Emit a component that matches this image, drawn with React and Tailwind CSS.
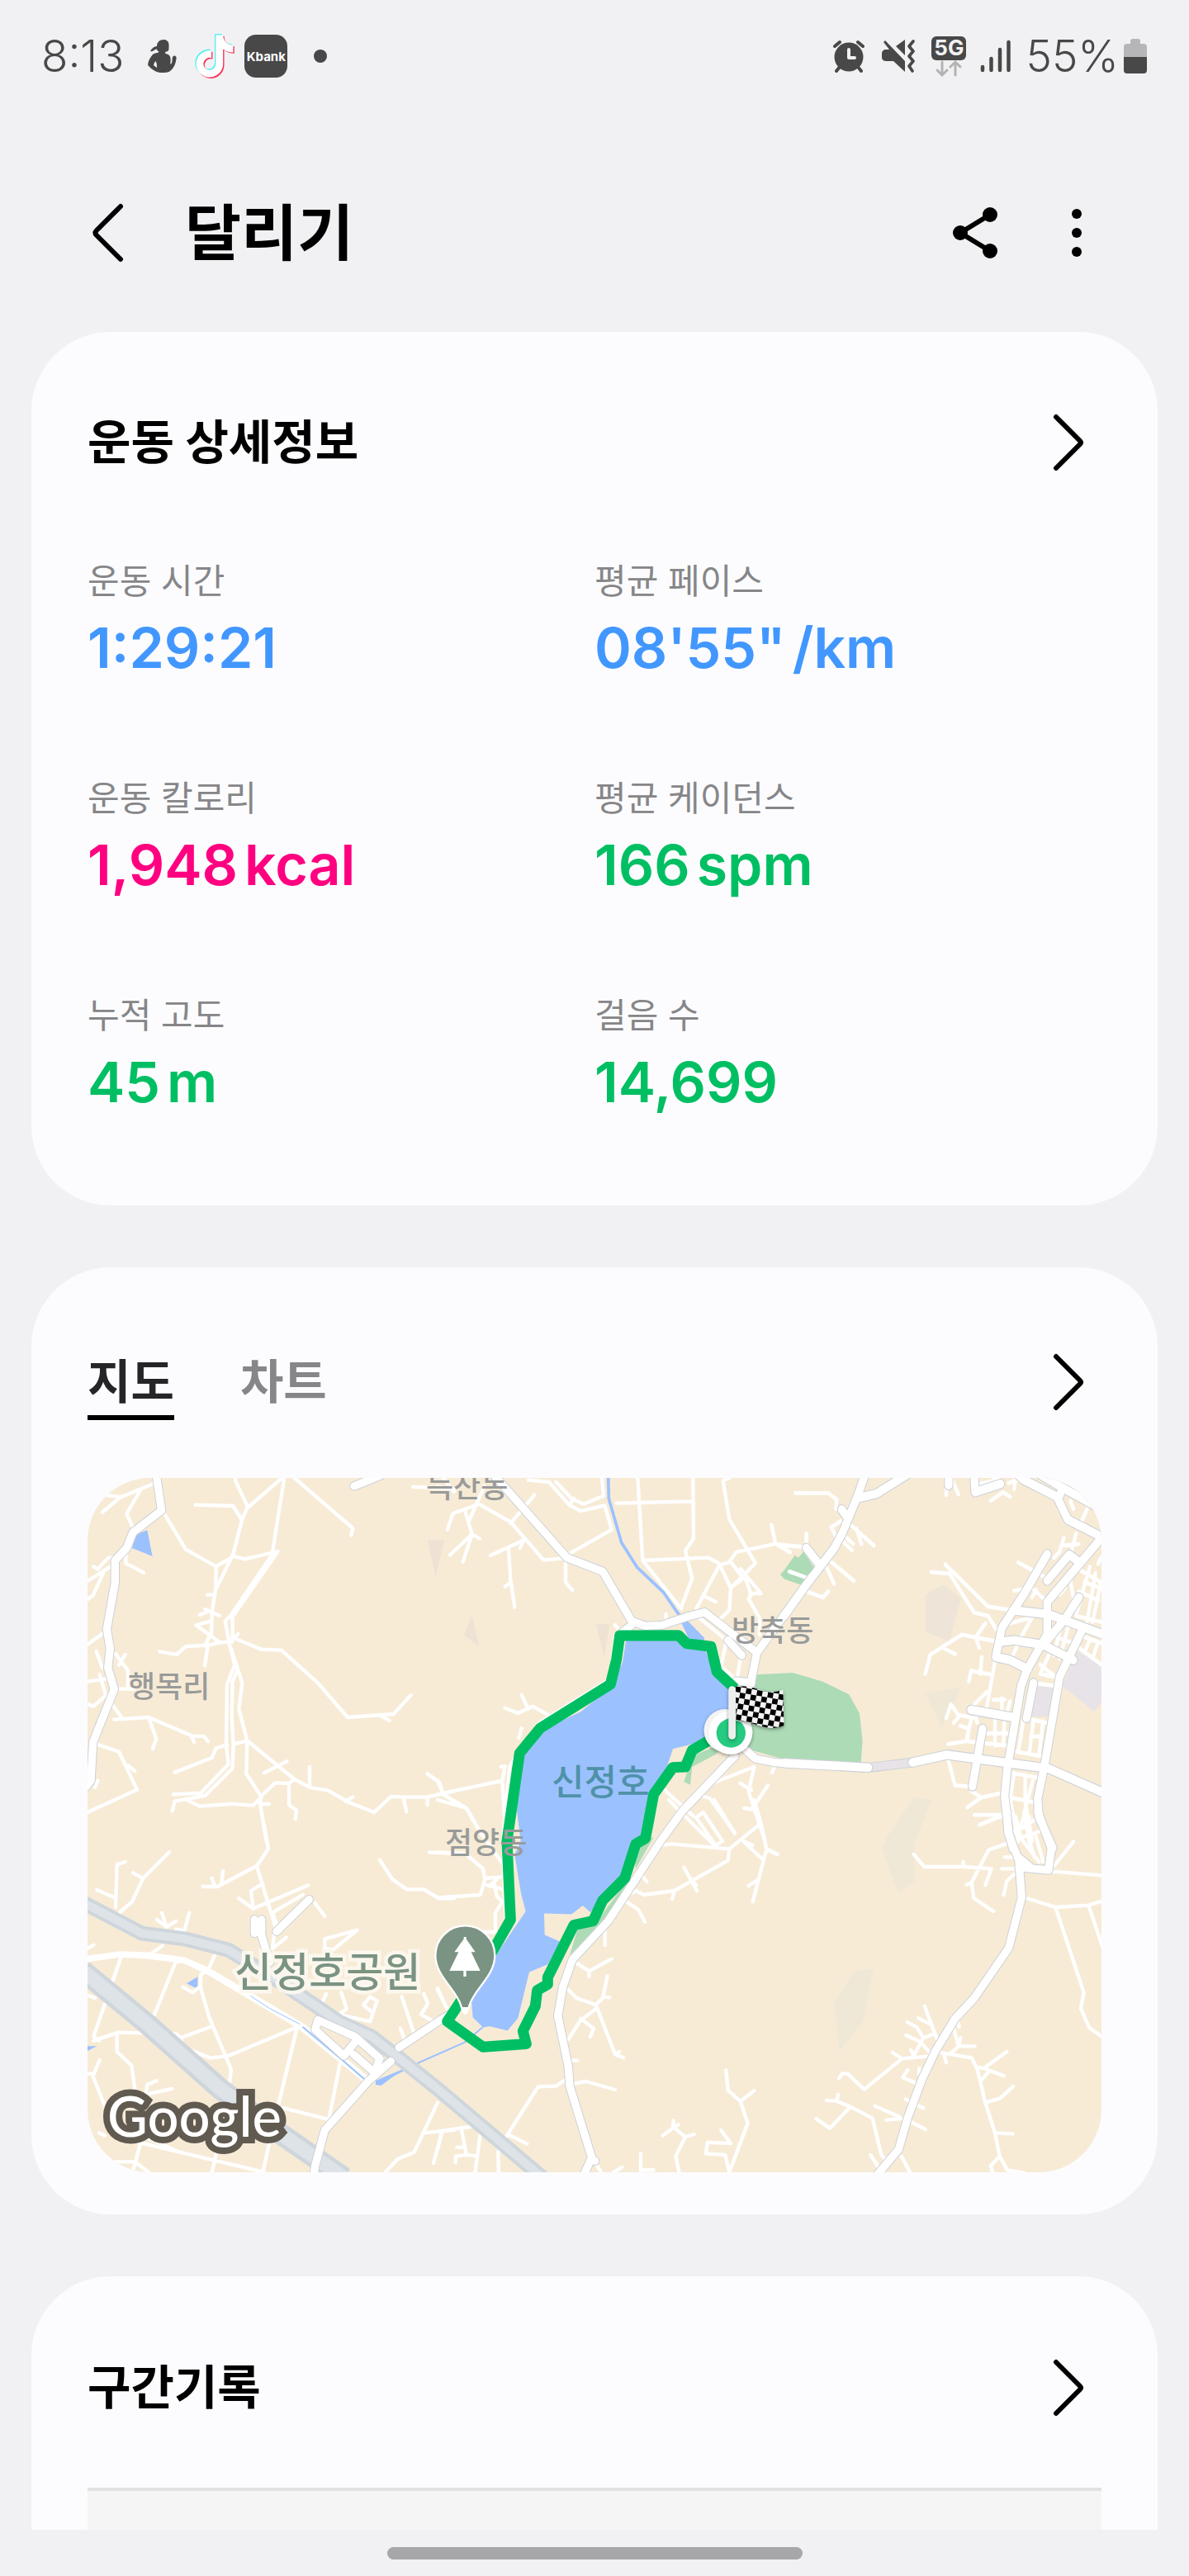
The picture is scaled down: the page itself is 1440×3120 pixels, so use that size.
import { useState } from 'react';
import clsx from 'clsx';

const STATS = [
  { label: '운동 시간', value: '1:29:21', color: 'text-[#4297ff]' },
  { label: '평균 페이스', value: '08\'55"', unit: '/km', color: 'text-[#4297ff]' },
  { label: '운동 칼로리', value: '1,948', unit: 'kcal', color: 'text-[#ff0080]' },
  { label: '평균 케이던스', value: '166', unit: 'spm', color: 'text-[#00bf63]' },
  { label: '누적 고도', value: '45', unit: 'm', color: 'text-[#00bf63]' },
  { label: '걸음 수', value: '14,699', color: 'text-[#00bf63]' },
];

const TABS = [
  { id: 'map', label: '지도' },
  { id: 'chart', label: '차트' },
];

// Road geometry is stored per tile, in tile units
const TILES = [
  {
    id: 'north-west',
    transform: 'translate(-6 -10) scale(0.3333)',
    minor:
      'M80 92L140 100L265 48M72 155L140 98M210 75L160 160L185 215M300 165L375 290L485 352L550 315L590 325L710 297M555 30V40L600 135L580 180L548 305L487 430M410 128L547 132L577 180M725 30L600 138M733 30L690 300M770 30L982 213L976 238M485 352L484 430L470 520L468 600M453 455H475M425 528L455 515M445 507L497 530M468 550L412 565L498 627M468 590L445 640M455 640L444 712M280 661L342 672L376 642L455 638L500 628L545 625M540 620L565 597M695 300L535 535M708 300L545 535M540 530L518 550L535 640L553 710L525 780L522 1000L530 1070L430 1175L330 1180M545 530V610L650 653L722 656L855 775L963 900L1130 888L1193 819M1085 895L1115 912M540 650L580 775L568 870L598 985L770 1125L825 1155L890 1165L970 1210L1060 1245L1120 1188L1165 1190H1250L1350 1168M562 730L545 770L542 900L548 1000L545 1085L445 1185L335 1205L326 1240M598 985L550 997M525 1000L485 1012L470 1047L335 1100M598 985L595 1105L650 1190L620 1220L540 1215L425 1223L385 1203M650 1185L700 1138L750 1140L770 1125M750 1140V1218L777 1238L773 1270M648 1190L645 1215L668 1350M645 1215H678M660 1102L742 1060M825 1080V1155M955 1205L982 1190M1165 1190L1177 1242M1253 1190V1218M1253 1105L1297 1137L1310 1180L1350 1205M157 300V340L222 374M40 352L55 362L93 320H110M18 405L105 350M75 375L38 457L18 472M18 635L75 595M50 660L72 720M155 672L132 710M120 670L165 730L165 790M18 770L85 760M62 745L85 820L40 860L18 852M130 797H185M105 850L145 905M115 908L240 900L400 968L442 969L456 988M395 968L405 990M240 900L268 978L255 1015M58 1000L132 1025L198 1163L18 1245M165 1075L190 1095M55 1130L45 1155M1200 63L1345 68',
    major:
      'M268 20L287 148L183 228L160 285L118 330V410L88 580L100 650L92 720L115 798L38 990L30 1130L10 1155M987 60L1085 20',
  },
  {
    id: 'north',
    transform: 'translate(424 -10) scale(0.3333)',
    minor:
      'M330 38L405 45L480 130L520 150L607 130L633 218L470 310M430 45L487 105L530 125L603 95L597 30M480 125L495 105M150 125L55 160L36 218M60 70L0 62M20 30L60 80M100 150L125 235L45 310M125 235L92 335M125 235L152 250M170 60L112 190M150 125L265 190L385 328L460 322M265 195L352 92M465 320V410L490 438M315 255L192 312M300 285L315 250M258 290L265 400L280 500M245 425L265 410M727 30L745 330L885 505M745 330L985 320L1030 345L1065 335M650 122L930 115M928 30L930 250L900 295L925 395L885 500M1060 30L1037 40L1060 180L1155 340L1065 430L1025 345L940 505M1060 335L1085 300L1228 270L1350 283M1213 200L1228 270L1280 300M1065 335L1110 395L1065 430L1060 510L1030 540M1100 360L1175 450H1135M1120 400L1140 455L1130 470L1170 540V600M970 460L1010 480M1300 85H1350M1340 235V280M940 530L1050 620L1030 715L1080 760M1100 690L1090 750M830 525V550M645 565L665 590M245 866L292 885L345 860L400 890M305 818L330 870M305 940L295 975M230 1080L245 1078L235 1130L0 1180M235 1130L245 1300M0 1130L20 1180L105 1230L150 1310M1010 1135L1150 1080L1130 1170L1190 1350M1200 1147L1155 1215L1140 1235L1115 1230M1100 1140L1140 1165M1215 1100L1225 1080M820 1160L930 1260M945 1180L990 1195L1080 1320M645 600L628 760L370 920L290 1030L262 1080L240 1300L240 1500L248 1630',
    major:
      'M205 20L470 320L600 370L705 550L755 568L815 565L905 535L970 518L1160 665M705 565L660 600M1055 620L1105 675M1360 390L1160 665L1135 790M1085 768L1140 775M1110 1010L1155 1050L1230 1065L1350 1072',
  },
  {
    id: 'north-east',
    transform: 'translate(844 -140) scale(0.3333 0.3699)',
    minor:
      'M40 428H160L190 450L187 480M205 520L170 540L190 575M225 520L325 600M262 545L280 595M245 615L205 580M215 565L250 595M165 650L252 715M150 665L180 725M80 750L140 770L160 750M80 560V605L0 600M0 610L20 622M590 400L588 435M610 385L632 432M750 453L795 425L820 440M840 378L835 415M700 400L780 385L760 378M815 395L850 385M533 687L600 692L690 820L740 830L770 875M585 662L740 800L830 812M512 1020L530 957L645 892L760 912M575 935L620 955M730 855L695 900L708 935M820 855L900 835L860 900L830 960M765 980L735 1130M717 965L712 1020M670 1045L678 1010L750 1022M735 1080L690 1120L700 1180M588 1165L605 1120L635 1160L615 1180M640 1190L670 1200L665 1240L595 1250M635 1155L690 1165M680 1165L660 1240L700 1245M765 1165V1255M725 1215H815M735 1248L810 1255M820 1110L810 1140M790 1100V1165M800 1170L795 1255M760 1105H800M595 1300L620 1385L685 1390M680 1405L715 1425L665 1457M715 1425L790 1410M690 1482H790L710 1515M830 1345L920 1360M835 1345L820 1430L850 1568M875 1350V1440L900 1568M820 1425L905 1440M905 1360L870 1480L890 1568M835 1540L905 1500M845 1275L935 1290M870 1165L850 1275M905 1170L890 1280M940 1175L925 1285M895 1225H935M870 1165L950 1180M905 1050L990 1060M930 990L985 1030M960 960L930 1020L980 1030M1000 880L980 960M1030 870L1000 970M990 900L1050 920M1090 900L1152 920M1070 935L1152 990M1110 910L1090 950M1140 915L1120 970M1110 670L1080 760L1060 830M1130 690L1100 850M1150 720L1120 850M1075 680L1150 720M1070 750L1140 780M1060 830L1150 850M1090 720L1150 740M850 655L960 710M835 748L900 740L950 780M900 770L915 745M1015 575L1000 620L980 640M1010 600L1070 595M1060 560L1040 630M1040 455L1050 480M1100 480L1080 520M1150 640L1140 660M1040 720L1050 770M1020 740L1000 760M18 685L80 705',
    major:
      'M292 370L265 440L210 560L180 610L70 740L0 830M450 365L335 430L265 445M80 608L125 660M208 482L230 510M597 370V402M690 370L693 425L785 398M845 365L870 385L990 440L1030 515L1160 575M925 365L1000 405L1160 485M1010 415L995 445M1152 575L955 785V890L880 1010L860 1060L810 1330L800 1420L815 1540L830 1590M955 715L1035 630L1065 650M955 628L870 760L790 870L768 965L820 975L885 1005M790 915L835 910L940 925L1050 975M830 812L960 825L1160 892M1070 770L1020 840L955 910M1080 880L1000 1030L945 1320L920 1430L925 1490L975 1590M905 1050L880 1165M678 1138L835 1163M720 1200L683 1388M465 1310L590 1285L960 1330L1160 1410M0 1312L305 1327',
  },
  {
    id: 'south-west',
    transform: 'translate(-6 420) scale(0.3333)',
    minor:
      'M660 0L675 88L633 150L700 370M633 150L490 225H437M470 195L480 220M510 168L505 215M820 220L620 305L568 268M645 220L612 240L620 305M845 285L880 333M800 255L690 320L705 360M700 370L690 450L740 410M315 100L220 195L180 280L135 318M183 175L220 195M155 135L125 145L120 300M52 237L115 265M288 320L305 372L270 345M340 350L305 372M388 320L370 385L340 380M1080 128L1125 198L1178 235H1240L1295 268H1350M1260 100L1350 105M998 383L880 415V450L910 455L998 383M18 482L140 466L240 470L370 488L455 525L800 728L1040 925M18 492L140 476L240 482L370 498L455 538L790 738L1030 935M140 480L40 770L60 785M340 495L255 705M480 475L455 530M240 475L290 440M18 450L40 437M455 530L430 545L428 590L460 700L540 890L530 970M365 590L400 610L425 590M40 785L130 755L340 760L360 780L355 805L465 848L530 840L780 735M355 775L465 735M780 735L710 1025L890 1070M125 760V825L178 875L190 960M18 620L45 630M62 855L38 915L80 1020M18 905H38M270 930L235 945L230 980L325 960M205 1155L660 1263M210 1160L185 1250M120 1225H190L240 1263M490 1180L470 1263M680 1150L655 1263M935 870L895 1070M60 1120L80 1130M220 1130L340 1185M885 615L865 660M940 610L960 670L930 690L1045 715L1070 640L1045 625L1020 655L1050 680M1160 625L1205 760M1240 615L1255 650L1230 690L1275 715M1290 600L1325 670M1155 740L1170 780M1290 1010L1205 1190L1145 1215L1100 1263M1240 1120L1350 1110M1305 1120L1275 1230',
    major:
      'M1350 680L1300 710L1150 810M1120 860L1040 930L880 1110L845 1240L840 1275M650 400L680 500M705 388L823 272M625 345V395M650 345V395M855 710L845 745L950 840L990 790M855 710L990 770L1080 850L1060 900L985 835',
  },
  {
    id: 'south',
    transform: 'translate(424 390) scale(0.3333)',
    minor:
      'M0 0L105 30L150 110L235 230M0 190L100 195L165 250L172 290L155 345L0 355M172 285L235 280M180 310L240 325M205 300L215 350L235 370L210 410V480H170M190 310L215 290M810 165L850 160L1060 178L1175 85L1150 0M1115 30L1150 35M1175 85L1195 180L1145 370M1195 180L1235 198M1110 150L1180 215M1165 290L1130 312M1145 165L1110 150M1060 178L1055 220L860 330L750 345L720 330L690 345M895 245L942 330M940 310L920 290M860 330L853 360M735 265L760 297M680 365L730 400L753 443M608 460V528M500 590L550 622L632 578M550 622V642M475 690L505 720L575 745L600 720L617 640M600 715L625 718M575 745L645 925L675 937M645 925L660 915M575 760L520 800L475 870M520 795L567 830L555 860M490 947H508M460 1020L430 1040L365 1042L255 1215L325 1250M255 1215L220 1280L222 1363M500 1030L540 1023L645 1053M0 1205L120 1188M85 1190L105 1290L65 1295V1318M155 1215L135 1363M105 1290L145 1295M15 1205L0 1270M70 1262H95M1048 982L1055 1055L1100 1095L1150 1057M1100 1095L1127 1175L1060 1353L1045 1290L975 1285L980 1245L1065 1248L1030 1200M818 1220L858 1190L900 1225L865 1295L880 1363M857 1165L855 1190L875 1180M900 1225L932 1215M738 1285V1363M738 1345H785M580 1330L600 1363M640 1353L670 1335M945 60L965 45L1035 150L1010 165L940 65M1005 0L1080 122M840 0L1005 165M0 685L30 750',
    major: 'M1080 -160L890 40L810 150L620 440L490 580L455 680L437 785L475 970L480 1040L560 1300L530 1365M560 1305L572 1312',
  },
  {
    id: 'south-east',
    transform: 'translate(824 410) scale(0.3333)',
    minor:
      'M770 30L850 0M0 120L35 138M530 138L568 183H710L812 190L790 250M710 165V183M870 98L802 122L740 240L748 297L820 345M740 240L722 248M860 148H890M850 190H900M895 210L868 235L857 285M900 0L920 80L985 165M930 0L910 60M950 0V30L890 55M985 55L925 75M945 75L970 150M970 60L1000 165M1040 180L1110 92M1035 200L1220 215M940 297L1045 330L1165 323L1220 306M1045 330L1148 640L1137 697L1167 767L1220 805M1165 323L1220 485M570 690L590 745L615 810M547 733L590 755M507 748L540 765L565 805L605 790M502 795L555 820L590 860M565 805L530 870L520 850M453 858L487 880L580 872M487 880L350 992L290 935H270L258 952M508 922L490 948L540 970M550 915V935M213 1032L250 1035L300 1055L380 1097L412 1230L430 1250M255 1010L250 1035M300 1055L225 1133L175 1098M388 1052L475 1090M430 1103L490 1098M500 1028L565 1060M520 1110L572 1137M373 1230L405 1280M485 1235L520 1300M675 770L693 835L660 865M693 835H752M700 805L693 835M690 745L695 765M620 857L740 877L760 915L790 1040L825 1150L842 1235L870 1285L930 1295M640 865L648 895M760 912L785 915L857 943M785 915L868 855M775 960L800 930M790 1040L843 1025L890 982M825 1150L890 1153M842 1235L810 1270L818 1300',
    major:
      'M868 -20L873 60L912 160L922 295L875 478L750 660L680 735L610 850L560 955L508 1095L475 1210L395 1305M980 -20L1030 115L1020 195L912 185M912 150L960 190',
  },
];

const LAKE =
  'M685 620L960 620L985 690L1010 740L1070 800L1050 960L955 990L855 1015L830 1090L790 1180L760 1300L740 1340L700 1400L670 1480L555 1608L527 1584L487 1616L387 1613L389 1691L448 1716L400 1798L333 1826L292 1993L254 2039L190 2023L165 2027L128 1991L122 1920L140 1870L208 1770L320 1605L303 1540L280 1400L302 1350L288 1240L300 1030L370 950L520 880L630 790L672 700Z';

const ROUTE =
  'M1080 795L1015 735L993 643L905 632L875 602L662 603L650 690L628 780L372 940L298 1030L252 1350L265 1635L205 1740L75 1945L35 2005L165 2098L322 2087L310 2040L355 1950L362 1892L400 1870L400 1845L495 1655L565 1640L600 1565L680 1485L720 1360L755 1340L785 1180L855 1082L900 1080L925 1020L1010 970';

const TIKTOK =
  'M448 209.9a210 210 0 0 1-122.8-39.3v178.8A162.6 162.6 0 1 1 185 188.3v89.9a74.6 74.6 0 1 0 52.2 71.2V0h88a121 121 0 0 0 1.9 22.2A122 122 0 0 0 381 102.4a121 121 0 0 0 67 20.1z';

function StatusBar() {
  return (
    <div className="flex h-[136px] items-center justify-between pr-[51px] pl-[50px] text-[#484848]">
      <div className="flex items-center">
        <span className="text-[53px] leading-[56px] font-light">8:13</span>
        <svg className="ml-[29px] h-10 w-[35px]" viewBox="0 0 35 40" fill="#484848" aria-hidden="true">
          <path d="M19 0c4 0 6.500 2.500 6.500 6v5c0 2.200-1.500 3.500-4.500 4l.4 2c5.500 1 6.200 4 6.200 7.500 0 3-.4 4.500 0 5.500 1.500-1 2-3 2-6 0-2 .4-4 2-4.500 2-.4 3.200 1 3 3-.7 7-4 14-9 16.500-4.500 1.500-11 1.200-14.500 0C6 37 1.500 33 0 30.500c.5-5 3-9 6-12.500 2-2 6.500-1.200 7.500-3.500-1.200-.5-2.500-1.500-2.600-3C8 11.500 7 15 3 14c2-3.500 4.500-6 8-6C11 4 13.500 0 19 0zM9.500 26c-2 2.500-3 4-2 5.500L11 34c.3-3-.3-6-1.500-8z" />
        </svg>
        <svg className="ml-[22px] h-[54px] w-12" viewBox="-14 -14 476 540" aria-hidden="true">
          <path d={TIKTOK} fill="#3ff0ee" transform="translate(-12 -12)" />
          <path d={TIKTOK} fill="#f5365c" transform="translate(14 14)" />
          <path d={TIKTOK} fill="#ffffff" />
        </svg>
        <span className="ml-3 flex h-[52px] w-[52px] items-center justify-center rounded-[14px] bg-[#484848] text-[15px] leading-none font-bold text-white">
          Kbank
        </span>
        <span className="ml-8 h-4 w-4 rounded-full bg-[#484848]" />
      </div>
      <div className="flex items-center">
        <svg className="h-10 w-10" viewBox="0 0 40 40" aria-hidden="true">
          <path d="M3 8L9 3M37 8L31 3M9 33L5 38M31 33L35 38" stroke="#484848" strokeWidth="4" strokeLinecap="round" />
          <circle cx="20" cy="21" r="17.500" fill="#484848" />
          <path d="M20 12V22H27" fill="none" stroke="#f1f1f3" strokeWidth="4" strokeLinecap="round" strokeLinejoin="round" />
        </svg>
        <svg className="ml-5 h-10 w-10" viewBox="0 0 40 40" aria-hidden="true">
          <path d="M4 1L28 26V39L14 26H5C2 26 0 24 0 22V17C0 14 2 12 5 12H9L2 3Z" fill="#484848" />
          <path d="M17 8L28 0V19Z" fill="#484848" />
          <path d="M38 2L33 8L38 14L33 20L38 26L33 32L37 38" fill="none" stroke="#484848" strokeWidth="3.600" strokeLinecap="round" strokeLinejoin="round" />
        </svg>
        <span className="ml-5 flex flex-col items-center">
          <span className="flex h-[29px] w-[42px] items-center justify-center rounded-md bg-[#484848] text-[26px] leading-none font-bold text-[#f1f1f3]">
            5G
          </span>
          <svg className="h-5 w-8" viewBox="0 0 32 20" fill="none" stroke="#b3b3b3" strokeWidth="3" strokeLinecap="round" aria-hidden="true">
            <path d="M8 2V18M2 12L8 18L14 12M24 18V2M18 8L24 2L30 8" />
          </svg>
        </span>
        <svg className="ml-4 h-10 w-10" viewBox="0 0 40 40" stroke="#484848" strokeWidth="4.500" strokeLinecap="round" aria-hidden="true">
          <path d="M4 33V37M14.500 23V37M25 12V37M35.500 3V37" />
        </svg>
        <span className="ml-4 text-[53px] leading-[56px] font-light">55%</span>
        <svg className="ml-1.5 h-[42px] w-7" viewBox="0 0 28 42" aria-hidden="true">
          <path d="M8 3Q8 0 11 0H17Q20 0 20 3V6H24Q28 6 28 10V22H0V10Q0 6 4 6H8Z" fill="#b6b6b8" />
          <path d="M0 22H28V38Q28 42 24 42H4Q0 42 0 38Z" fill="#484848" />
        </svg>
      </div>
    </div>
  );
}

function Header() {
  return (
    <header className="flex items-center px-[106px] pt-[106px] pb-20">
      <button type="button" aria-label="뒤로" className="flex h-20 w-12 items-center justify-center">
        <svg className="h-[72px] w-10" viewBox="0 0 40 72" fill="none" stroke="#000" strokeWidth="6" strokeLinecap="round" strokeLinejoin="round">
          <path d="M36 4L7 33Q4 36 7 39L36 68" />
        </svg>
      </button>
      <h1 className="ml-[70px] text-[74px] leading-[80px] font-bold">달리기</h1>
      <button type="button" aria-label="공유" className="ml-auto flex h-20 w-20 items-center justify-center">
        <svg className="h-16 w-14" viewBox="0 0 56 64">
          <path d="M46 10L10 32L46 54" fill="none" stroke="#000" strokeWidth="6" />
          <circle cx="46" cy="10" r="9" />
          <circle cx="10" cy="32" r="9" />
          <circle cx="46" cy="54" r="9" />
        </svg>
      </button>
      <button type="button" aria-label="더보기" className="ml-[52px] flex h-20 w-[61px] items-center justify-center">
        <svg className="h-[60px] w-3" viewBox="0 0 12 60">
          <circle cx="6" cy="7" r="6" />
          <circle cx="6" cy="30" r="6" />
          <circle cx="6" cy="53" r="6" />
        </svg>
      </button>
    </header>
  );
}

function MoreButton({ label }) {
  return (
    <button type="button" aria-label={label} className="flex h-20 w-20 items-center justify-center">
      <svg className="h-[72px] w-10" viewBox="0 0 40 72" fill="none" stroke="#000" strokeWidth="6" strokeLinecap="round" strokeLinejoin="round">
        <path d="M5 5L34 34Q36 36 34 38L5 67" />
      </svg>
    </button>
  );
}

function Stat({ label, value, unit, color }) {
  return (
    <div>
      <dt className="text-[42px] leading-[48px] text-[#868688]">{label}</dt>
      <dd className={clsx('mt-4 flex gap-2 text-[68px] leading-[80px] font-semibold', color)}>
        <span>{value}</span>
        {unit && <span>{unit}</span>}
      </dd>
    </div>
  );
}

function RouteMap() {
  return (
    <svg className="block h-auto w-full rounded-[76px]" viewBox="0 0 1228 841" role="img" aria-label="신정호 달리기 경로">
      <defs>
        <pattern id="checks" width="40" height="40" patternUnits="userSpaceOnUse" patternTransform="translate(1083 787) rotate(10)">
          <rect width="40" height="40" fill="#f2f2f2" />
          <rect width="20" height="20" fill="#000" />
          <rect x="20" y="20" width="20" height="20" fill="#000" />
        </pattern>
        <filter id="drop" x="-30%" y="-30%" width="160%" height="160%">
          <feDropShadow dx="0" dy="5" stdDeviation="7" floodOpacity="0.4" />
        </filter>
      </defs>
      <rect width="1228" height="841" fill="#f7ebd6" />

      <g transform="translate(-6 -10) scale(0.3333)">
        <path d="M180 285L195 235L235 220L254 315Z" fill="#9cc1ff" />
        <path d="M1253 255H1315L1283 388Z" fill="#eee2d5" />
      </g>
      <g transform="translate(424 -10) scale(0.3333)">
        <path d="M575 562H625L605 680ZM125 532L152 645L95 600Z" fill="#eee2d5" />
        <path d="M1155 745L1290 738L1400 770L1495 817L1533 886L1544 986L1538 1064L1260 1053L1110 1010Z" fill="#addbb6" />
        <path d="M925 1040L1060 985L1010 1035L925 1080L918 1145L895 1135ZM710 1370L785 1335L720 1450ZM510 1665L580 1640L700 1480L640 1600L480 1765Z" fill="#addbb6" />
        <path d="M620 20L622 105L668 265L725 355L820 445L875 525" fill="none" stroke="#9cc1ff" strokeWidth="11" />
        <path d="M860 500L968 610L975 660L920 630Z" fill="#9cc1ff" />
      </g>
      <g transform="translate(844 -140) scale(0.3333 0.3699)">
        <path d="M0 680L38 632L50 640L70 620L110 675L65 730L0 710L-15 695Z" fill="#addbb6" />
        <path d="M512 762L575 728L642 770L600 915L512 882Z" fill="#efe4d8" />
        <path d="M1065 945L1160 995V1105L1125 1143L1010 1060ZM915 1060L980 1065L960 1160L895 1160Z" fill="#e8e3e8" />
        <path d="M512 1085L645 1063L572 1197Z" fill="#efe8d6" />
        <path d="M310 1327L465 1310" stroke="#c9d3d6" strokeWidth="32" />
        <path d="M300 1327L475 1310" stroke="#e8e3e8" strokeWidth="27" />
      </g>
      <g transform="translate(824 410) scale(0.3333)" fill="#efe8d6">
        <path d="M530 -70L595 -60L533 95V235L472 278L413 115L430 80Z" />
        <path d="M315 560L383 555L347 745L260 852L238 680Z" />
      </g>
      <g transform="translate(-6 420) scale(0.3333)" fill="#9cc1ff">
        <path d="M378 577L418 553V597ZM18 805H52L18 822ZM1065 930L1165 888L1085 948L1065 945Z" />
      </g>

      {TILES.map((tile) => (
        <g key={tile.id} transform={tile.transform} fill="none" stroke="#ffffff" strokeWidth="13" strokeLinecap="round" strokeLinejoin="round">
          <path d={tile.minor} />
        </g>
      ))}

      <g transform="translate(-6 420) scale(0.3333)" fill="none" stroke="#9cc1ff" strokeWidth="6">
        <path d="M610 622L680 668L790 725" strokeWidth="3" />
        <path d="M800 735L940 852L1030 930" />
        <path d="M1455 735L1390 790L1215 868L1070 940" />
      </g>
      <g transform="translate(-6 420) scale(0.3333)" fill="none" strokeLinejoin="round">
        <path d="M0 282L215 395L370 415L530 455L700 560L850 660L930 715L1050 770L1140 840L1290 960L1680 1290" stroke="#ced6dc" strokeWidth="54" />
        <path d="M0 282L215 395L370 415L530 455L700 560L850 660L930 715L1050 770L1140 840L1290 960L1680 1290" stroke="#dee3e8" strokeWidth="30" />
        <path d="M0 530L230 720L500 960L700 1110L950 1283" stroke="#ced6dc" strokeWidth="78" />
        <path d="M0 530L230 720L500 960L700 1110L950 1283" stroke="#dee3e8" strokeWidth="50" />
      </g>

      {TILES.map((tile) => (
        <g key={tile.id} transform={tile.transform} fill="none" stroke="#cdd1d6" strokeWidth="34" strokeLinecap="round" strokeLinejoin="round">
          <path d={tile.major} />
        </g>
      ))}
      {TILES.map((tile) => (
        <g key={tile.id} transform={tile.transform} fill="none" stroke="#ffffff" strokeWidth="28" strokeLinecap="round" strokeLinejoin="round">
          <path d={tile.major} />
        </g>
      ))}

      <g fontSize="36" fill="#999b9a" className="font-medium">
        <text x="410" y="24">득산동</text>
        <text x="49" y="266">행목리</text>
        <text x="780" y="198">방축동</text>
      </g>

      <g transform="translate(424 -10) scale(0.3333)">
        <path d={LAKE} fill="#9cc1ff" />
        <path d={ROUTE} fill="none" stroke="#00bf63" strokeWidth="39" strokeLinejoin="round" />
        <g filter="url(#drop)">
          <circle cx="1046" cy="948" r="78" fill="#f4f4f4" />
          <circle cx="1065" cy="955" r="79" fill="#ffffff" />
        </g>
        <circle cx="1066" cy="957" r="53" fill="#26ca80" />
        <g filter="url(#drop)">
          <path d="M1083 787Q1130 785 1170 800T1255 800L1258 930Q1220 948 1170 930T1085 912Z" fill="url(#checks)" />
          <path d="M1070 800V967" stroke="#eeeeee" strokeWidth="26" strokeLinecap="round" />
        </g>
        <path
          d="M100 1976C92 1976 90 1965 84 1945C65 1885 -8 1840 -8 1765A108 108 0 0 1 208 1765C208 1840 135 1885 116 1945C110 1965 108 1976 100 1976Z"
          fill="#7b9383"
          stroke="#ffffff"
          strokeWidth="7"
        />
        <path d="M92 1957L100 1974L108 1957Z" fill="#fff" stroke="#fff" strokeWidth="8" />
        <path d="M95 1698H104V1706L137 1753H122L155 1821H104V1842H94V1821H43L76 1753H61L95 1706Z" fill="#ffffff" />
      </g>

      <text x="433" y="455" fontSize="36" fill="#999b9a" className="font-medium">
        점양동
      </text>
      <text x="562" y="384" fontSize="43" fill="#4f92a8" className="font-medium">
        신정호
      </text>
      <text x="178" y="616" fontSize="49" fill="#7b9383" stroke="#fcf8f0" strokeOpacity="0.9" strokeWidth="9" paintOrder="stroke" className="font-medium">
        신정호공원
      </text>
      <text x="24" y="798" fontSize="67" className="font-['Lato'] font-medium" fill="#ffffff" stroke="#605a50" strokeWidth="16" paintOrder="stroke">
        Google
      </text>
    </svg>
  );
}

export default function App() {
  const [tab, setTab] = useState('map');

  return (
    <div className="min-h-screen bg-[#f1f1f3] font-['Inter','Noto_Sans_CJK_KR',sans-serif] text-black">
      <StatusBar />
      <Header />

      <main className="flex flex-col gap-[75px] px-[38px]">
        <section className="rounded-[96px] bg-[#fcfcfe] px-[68px] pt-[94px] pb-[110px]">
          <div className="flex items-center justify-between">
            <h2 className="text-[57px] leading-[80px] font-bold">운동 상세정보</h2>
            <MoreButton label="운동 상세정보 보기" />
          </div>
          <dl className="mt-[104px] grid grid-cols-2 gap-y-[119px]">
            {STATS.map((stat) => (
              <Stat key={stat.label} {...stat} />
            ))}
          </dl>
        </section>

        <section className="rounded-[96px] bg-[#fcfcfe] px-[68px] pt-[99px] pb-[51px]">
          <div className="flex items-center justify-between">
            <div role="tablist" className="flex gap-20">
              {TABS.map(({ id, label }) => (
                <button
                  key={id}
                  type="button"
                  role="tab"
                  aria-selected={tab === id}
                  onClick={() => setTab(id)}
                  className={clsx('relative text-[57px] leading-[80px] font-bold', tab === id ? 'text-[#252527]' : 'text-[#868688]')}
                >
                  {label}
                  {tab === id && <span className="absolute inset-x-0 -bottom-1.5 h-1.5 bg-black" />}
                </button>
              ))}
            </div>
            <MoreButton label="지도 보기" />
          </div>
          <div className="mt-[76px]">
            <RouteMap />
          </div>
        </section>

        <section className="rounded-t-[96px] bg-[#fcfcfe] px-[68px] pt-[95px]">
          <div className="flex items-center justify-between">
            <h2 className="text-[57px] leading-[80px] font-bold">구간기록</h2>
            <MoreButton label="구간기록 보기" />
          </div>
          <div className="mt-[81px] h-[51px] border-t-4 border-[#e2e2e3] bg-[#f5f5f6]" />
        </section>
      </main>

      <footer className="flex h-14 items-center justify-center">
        <span className="h-[15px] w-[503px] rounded-full bg-[#a7a7a9]" />
      </footer>
    </div>
  );
}
